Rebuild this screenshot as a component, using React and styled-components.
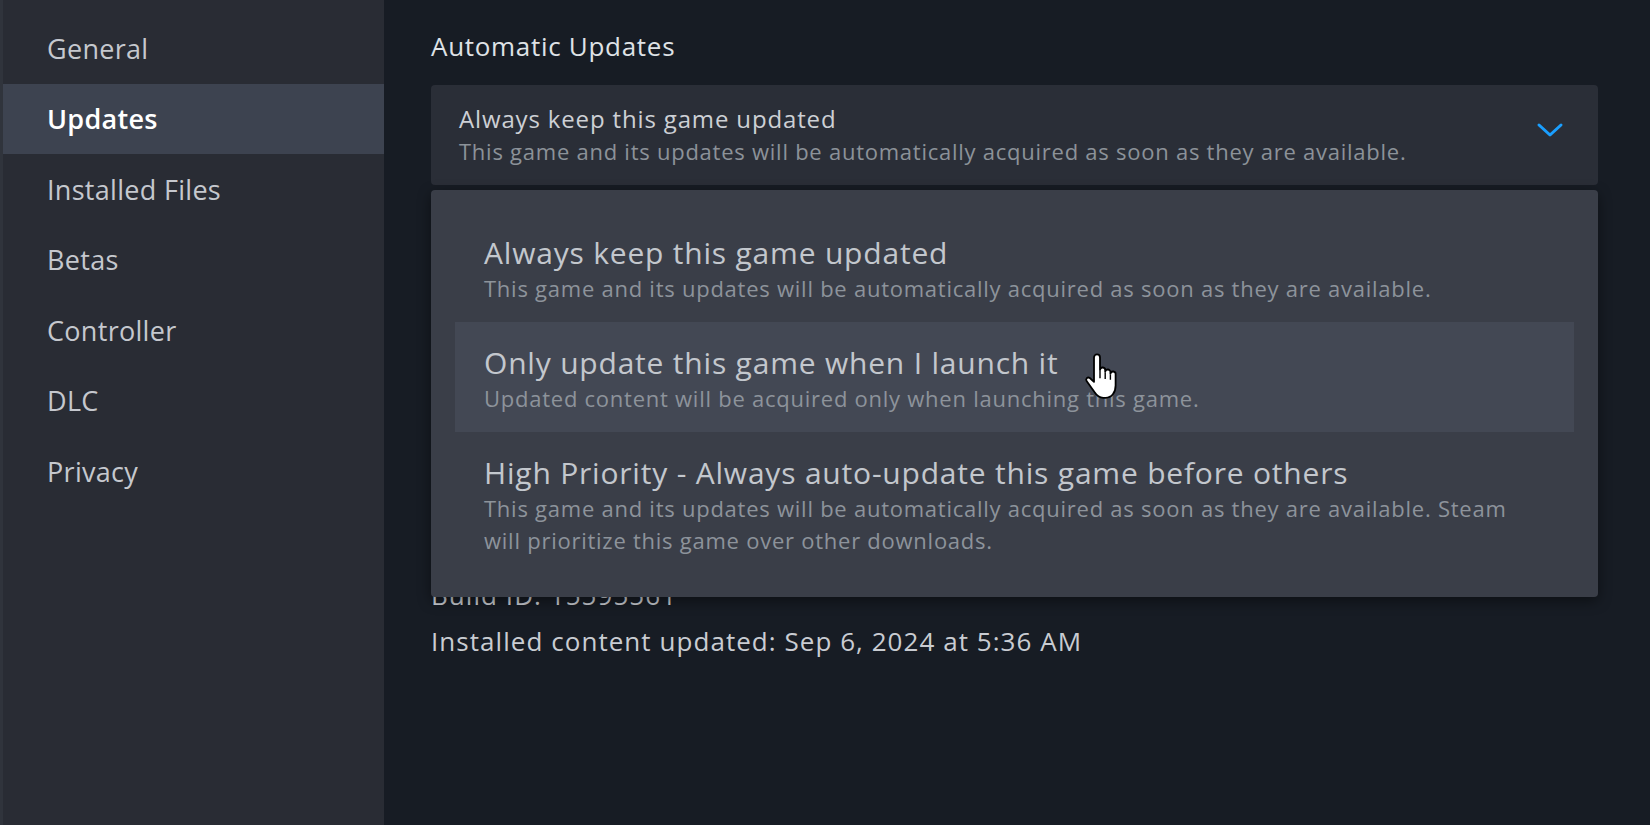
import styled, { createGlobalStyle } from "styled-components"

const Global = createGlobalStyle`
  html, body {
    margin: 0;
    padding: 0;
    background: #171c24;
  }
  * { box-sizing: border-box; }
`;

const Page = styled.div`
  display: flex;
  width: 100%;
  height: 100vh;
  min-height: 825px;
  background: #171c24;
  font-family: "Open Sans", "Noto Sans", sans-serif;
  overflow: hidden;
`;

const Sidebar = styled.nav`
  width: 384px;
  flex-shrink: 0;
  background: #292c34;
  border-left: 3px solid #30343c;
  padding-top: 13px;
  display: flex;
  flex-direction: column;
`;

const NavItem = styled.div`
  height: 70.5px;
  display: flex;
  align-items: center;
  padding-left: 44px;
  font-size: 27px;
  letter-spacing: 0.3px;
  font-weight: ${p => (p.active ? 600 : 500)};
  color: ${p => (p.active ? "#ffffff" : "#c5c8ce")};
  background: ${p => (p.active ? "#3d4350" : "transparent")};
`;

const Main = styled.main`
  flex: 1;
  padding: 30px 52px 0 47px;
  display: flex;
  flex-direction: column;
`;

const Heading = styled.h2`
  margin: 0 0 23px;
  font-size: 26px;
  letter-spacing: 0.7px;
  line-height: 32px;
  font-weight: 500;
  color: #dfe2e6;
`;

const SelectWrap = styled.div`
  position: relative;
`;

const Select = styled.div`
  height: 100px;
  border-radius: 4px;
  background: #2a2e37;
  padding: 0 34px 0 28px;
  display: flex;
  align-items: center;
  justify-content: space-between;
`;

const SelectText = styled.div`
  display: flex;
  flex-direction: column;
`;

const SelectTitle = styled.div`
  font-size: 24px;
  letter-spacing: 0.85px;
  line-height: 32px;
  color: #cdd0d5;
`;

const Desc = styled.div`
  font-size: 22px;
  letter-spacing: 0.75px;
  line-height: 32px;
  color: ${p => p.color || "#8c9299"};
`;

const Chevron = styled.svg`
  width: 28px;
  height: 18px;
  margin-bottom: 10px;
`;

const Menu = styled.div`
  position: absolute;
  top: calc(100% + 5px);
  left: 0;
  right: 0;
  height: 407px;
  background: #3a3e48;
  border-radius: 4px;
  box-shadow: 0 4px 14px rgba(0, 0, 0, 0.45);
  padding: 22px 24px 23px;
  display: flex;
  flex-direction: column;
  z-index: 2;
`;

const Option = styled.div`
  position: relative;
  min-height: 110px;
  padding: 22px 29px 18px;
  background: ${p => (p.hover ? "#434854" : "transparent")};
`;

const OptionTitle = styled.div`
  font-size: 30px;
  letter-spacing: 0.8px;
  line-height: 38px;
  color: #c3c7cd;
`;

const Info = styled.div`
  margin-top: 387px;
  display: flex;
  flex-direction: column;
`;

const InfoLine = styled.div`
  font-size: 26px;
  letter-spacing: 1.05px;
  line-height: 46px;
  color: #c9ccd2;
`;

const Cursor = styled.svg`
  position: absolute;
  left: 629px;
  top: 31px;
  width: 34px;
  height: 48px;
`;

const navItems = ["General", "Updates", "Installed Files", "Betas", "Controller", "DLC", "Privacy"];

const options = [
  {
    title: "Always keep this game updated",
    desc: "This game and its updates will be automatically acquired as soon as they are available.",
  },
  {
    title: "Only update this game when I launch it",
    desc: "Updated content will be acquired only when launching this game.",
    hover: true,
  },
  {
    title: "High Priority - Always auto-update this game before others",
    desc: "This game and its updates will be automatically acquired as soon as they are available. Steam will prioritize this game over other downloads.",
  },
];

const HandCursor = () => (
  <Cursor viewBox="0 0 17 24">
    <path
      d="M5 2.2a1.5 1.5 0 0 1 3 0V8.4a1.3 1.3 0 0 1 2.6 0.3V9.4a1.3 1.3 0 0 1 2.6 0.3V10.4a1.3 1.3 0 0 1 2.6 0.3V16.2c0 3.6-2 6.2-5 6.2H9.6c-2 0-3.2-1-4.2-2.6L1.3 14c-0.7-1 0.5-2.3 1.6-1.5L5 14.4Z"
      fill="#ffffff"
      stroke="#000000"
      strokeWidth="0.9"
      strokeLinejoin="round"
    />
    <path d="M8 8.6V12.6M10.6 9.8V13M13.2 10.8V13.4" stroke="#000000" strokeWidth="0.7" fill="none" />
  </Cursor>
);

const App = () => {
  return (
    <>
      <Global />
      <Page>
        <Sidebar>
          {navItems.map(item => (
            <NavItem key={item} active={item === "Updates"}>{item}</NavItem>
          ))}
        </Sidebar>
        <Main>
          <Heading>Automatic Updates</Heading>
          <SelectWrap>
            <Select>
              <SelectText>
                <SelectTitle>Always keep this game updated</SelectTitle>
                <Desc>This game and its updates will be automatically acquired as soon as they are available.</Desc>
              </SelectText>
              <Chevron viewBox="0 0 28 18">
                <path d="M3 4l11 10L25 4" fill="none" stroke="#1a9fff" strokeWidth="3" strokeLinecap="round" strokeLinejoin="round" />
              </Chevron>
            </Select>
            <Menu>
              {options.map(opt => (
                <Option key={opt.title} hover={opt.hover}>
                  <OptionTitle>{opt.title}</OptionTitle>
                  <Desc color="#8d939b">{opt.desc}</Desc>
                  {opt.hover && <HandCursor />}
                </Option>
              ))}
            </Menu>
          </SelectWrap>
          <Info>
            <InfoLine>Build ID: 15595561</InfoLine>
            <InfoLine>Installed content updated: Sep 6, 2024 at 5:36 AM</InfoLine>
          </Info>
        </Main>
      </Page>
    </>
  )
}

export default App
